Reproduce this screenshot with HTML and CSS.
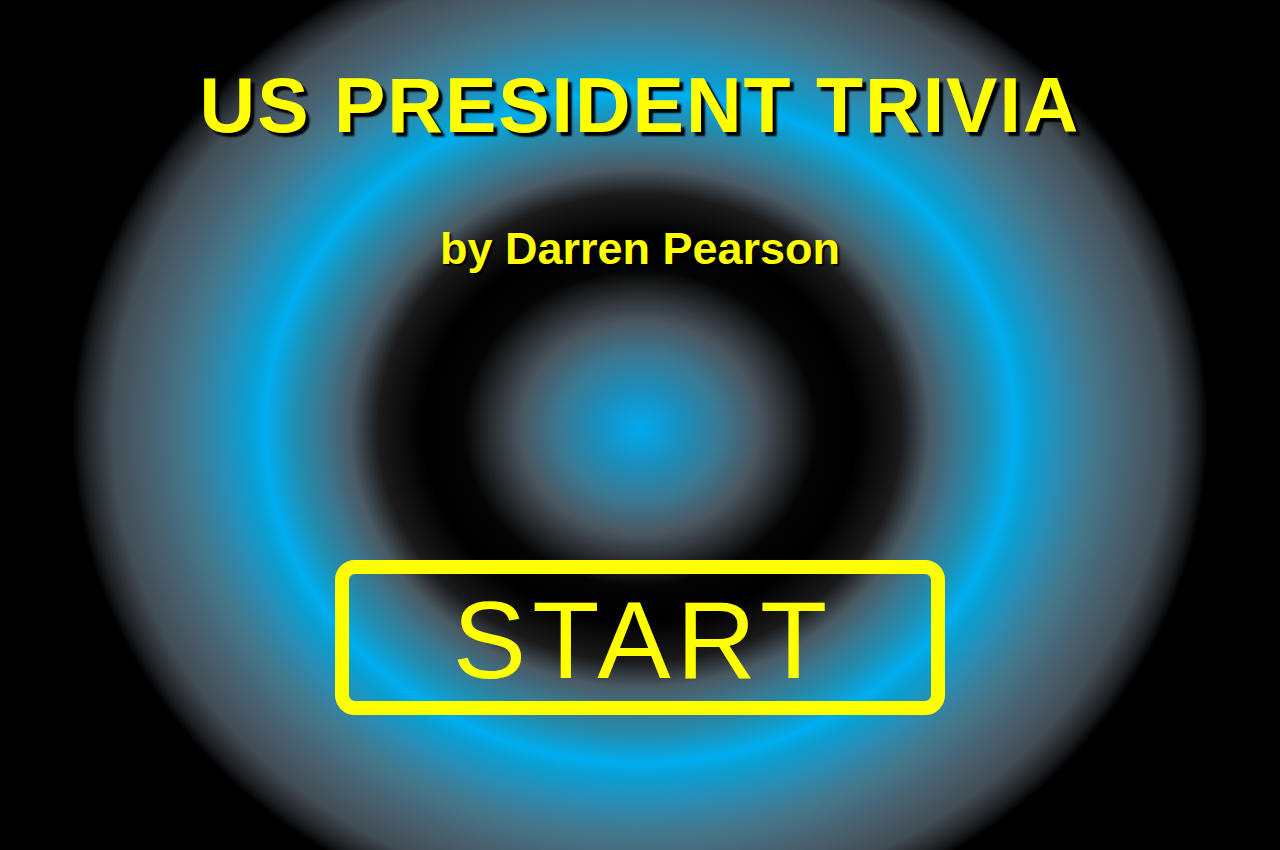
FILE: index.html
```html
<!DOCTYPE html>
<html lang="en">
	<head>
		<meta charset="UTF-8" />
		<meta name="viewport" content="width=device-width, initial-scale=1.0" />
		<title>US President Trivia</title>
		<link rel="stylesheet" href="styles.css">
	</head>

	<body>
		<div class="screen">
			<h1 class="title">US PRESIDENT TRIVIA</h1>
			<p class="byline">by Darren Pearson</p>
			<button class="start" type="button">START</button>
		</div>
	</body>
</html>
```

FILE: styles.css
```css
:root {
	--yellow: #ffff00;
	--cyan:   #00aef0;
	--teal:   #1e90b4;
	--slate:  #4a5a64;
}

html, body {
	margin: 0;
	padding: 0;
	background: #000;
}

.screen {
	width: 1280px;
	height: 850px;
	overflow: hidden;
	display: flex;
	flex-direction: column;
	align-items: center;
	font-family: "Liberation Sans", Arial, sans-serif;
	color: var(--yellow);
	background: radial-gradient(568px 508px at 640px 428px,
		#00aaee 0%,
		#1890c0 7%,
		#3a7a94 14%,
		#4a5660 21%,
		#2a2e32 26%,
		#050505 31%,
		#000 38%,
		#1a1a1a 46%,
		var(--slate) 51%,
		#3a7890 56%,
		var(--teal) 61%,
		var(--cyan) 66%,
		#0a9ed0 69%,
		#2a8cb4 74%,
		#44788c 80%,
		#48606e 87%,
		#434d54 93%,
		#1a1d20 98%,
		#000 100%);
}

.title {
	margin: 67px 0 0 0;
	font-size: 77px;
	line-height: 77px;
	font-weight: bold;
	letter-spacing: 2px;
	text-shadow: 4px 4px 2px #000;
}

.byline {
	margin: 82px 0 0 0;
	font-size: 45px;
	line-height: 45px;
	font-weight: bold;
	text-shadow: 2px 2px 2px #000;
}

.start {
	margin-top: 289px;
	width: 610px;
	height: 155px;
	padding: 11px 0 6px 6px;
	border: 14px solid var(--yellow);
	border-radius: 20px;
	background: none;
	color: var(--yellow);
	font-family: inherit;
	font-size: 110px;
	line-height: 110px;
	letter-spacing: 6px;
	cursor: pointer;
}
```
